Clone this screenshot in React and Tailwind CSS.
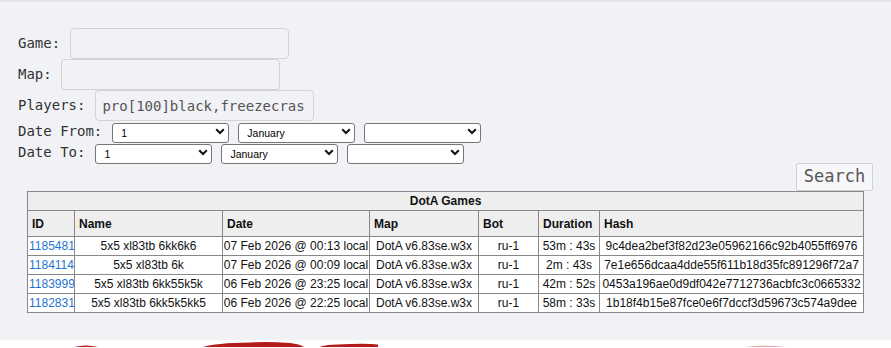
import React from 'react';

const games = [
  { id: '1185481', name: '5x5 xl83tb 6kk6k6', date: '07 Feb 2026 @ 00:13 local', map: 'DotA v6.83se.w3x', bot: 'ru-1', dur: '53m : 43s', hash: '9c4dea2bef3f82d23e05962166c92b4055ff6976' },
  { id: '1184114', name: '5x5 xl83tb 6k', date: '07 Feb 2026 @ 00:09 local', map: 'DotA v6.83se.w3x', bot: 'ru-1', dur: '2m : 43s', hash: '7e1e656dcaa4dde55f611b18d35fc891296f72a7' },
  { id: '1183999', name: '5x5 xl83tb 6kk55k5k', date: '06 Feb 2026 @ 23:25 local', map: 'DotA v6.83se.w3x', bot: 'ru-1', dur: '42m : 52s', hash: '0453a196ae0d9df042e7712736acbfc3c0665332' },
  { id: '1182831', name: '5x5 xl83tb 6kk5k5kk5', date: '06 Feb 2026 @ 22:25 local', map: 'DotA v6.83se.w3x', bot: 'ru-1', dur: '58m : 33s', hash: '1b18f4b15e87fce0e6f7dccf3d59673c574a9dee' },
];

const Chevron = () => (
  <svg className="pointer-events-none absolute right-[4px] top-[6px]" width="10" height="7" viewBox="0 0 10 7">
    <path d="M1.2 1.2 L5 5 L8.8 1.2" fill="none" stroke="#111" strokeWidth="2" />
  </svg>
);

const Select = ({ value }) => (
  <div className="relative h-[20px] w-[117px]">
    <select
      defaultValue={value}
      className="h-full w-full appearance-none rounded-[3px] border border-[#767676] bg-white pl-[8px] text-[10.5px] text-black outline-none"
      style={{ fontFamily: '"Liberation Sans", Arial, sans-serif' }}
    >
      <option value={value}>{value}</option>
    </select>
    <Chevron />
  </div>
);

const TextField = ({ value }) => (
  <input
    type="text"
    defaultValue={value}
    className="h-[31px] w-[219px] rounded-[4px] border border-[#d2d3d7] bg-[#f1f2f6] px-[6px] text-[14px] text-[#555] outline-none"
  />
);

export default function App() {
  return (
    <div className="w-[891px] bg-white">
      <div
        className="flex flex-col border-t-2 border-[#e5e6ea] bg-[#f1f2f6] px-[18px] pt-[26px] pb-[27px] text-[14px] text-[#333]"
        style={{ fontFamily: '"DejaVu Sans Mono", monospace' }}
      >
        <div className="flex items-center gap-[10px]">
          <span>Game:</span>
          <TextField value="" />
        </div>
        <div className="flex items-center gap-[9px]">
          <span>Map:</span>
          <TextField value="" />
        </div>
        <div className="flex items-center gap-[10px]">
          <span>Players:</span>
          <TextField value="pro[100]black,freezecras" />
        </div>
        <div className="flex h-[21px] items-center gap-[10px]">
          <span>Date From:</span>
          <div className="flex gap-[9px]">
            <Select value="1" />
            <Select value="January" />
            <Select value="" />
          </div>
        </div>
        <div className="flex h-[21px] items-center gap-[10px]">
          <span>Date To:</span>
          <div className="flex gap-[9px]">
            <Select value="1" />
            <Select value="January" />
            <Select value="" />
          </div>
        </div>
        <div className="flex justify-end">
          <button className="h-[28px] w-[77px] rounded-[2px] border border-[#cfd0d4] bg-[#f7f7f9] text-[17px] text-[#555]">
            Search
          </button>
        </div>
        <table
          className="ml-[9px] w-[836px] table-fixed border-collapse border border-[#888] text-[12px] text-[#111]"
          style={{ fontFamily: '"Liberation Sans", Arial, sans-serif' }}
        >
          <colgroup>
            <col className="w-[47px]" />
            <col className="w-[148px]" />
            <col className="w-[147px]" />
            <col className="w-[109px]" />
            <col className="w-[60px]" />
            <col className="w-[61px]" />
            <col className="w-[264px]" />
          </colgroup>
          <thead>
            <tr className="h-[19px] bg-[#eeeeee]">
              <th colSpan={7} className="border border-[#888] p-0 text-center font-bold">DotA Games</th>
            </tr>
            <tr className="h-[26px] bg-[#eeeeee] text-left font-bold">
              {['ID', 'Name', 'Date', 'Map', 'Bot', 'Duration', 'Hash'].map((h) => (
                <th key={h} className="border border-[#888] px-[4px] py-0 text-left">{h}</th>
              ))}
            </tr>
          </thead>
          <tbody className="bg-white">
            {games.map((g) => (
              <tr key={g.id} className="h-[19px]">
                <td className="overflow-hidden whitespace-nowrap border border-[#888] p-0 pl-[1px] text-left text-[#1f74cf]">{g.id}</td>
                <td className="whitespace-nowrap border border-[#888] p-0 text-center">{g.name}</td>
                <td className="whitespace-nowrap border border-[#888] p-0 text-center">{g.date}</td>
                <td className="whitespace-nowrap border border-[#888] p-0 text-center">{g.map}</td>
                <td className="whitespace-nowrap border border-[#888] p-0 text-center">{g.bot}</td>
                <td className="whitespace-nowrap border border-[#888] p-0 text-center">{g.dur}</td>
                <td className="whitespace-nowrap border border-[#888] p-0 text-center">{g.hash}</td>
              </tr>
            ))}
          </tbody>
        </table>
      </div>
      <svg width="891" height="7" viewBox="0 0 891 7" className="block">
        <path d="M74 7 Q86 4 98 7 Z" fill="#b41c1c" />
        <path d="M203 7 Q215 3 250 2.5 Q268 1.5 290 3 Q300 4 304 7 Z" fill="#b41c1c" />
        <path d="M320 7 Q322 4.5 350 4 Q370 3.5 378 4.5 L378 7 Z" fill="#b41c1c" />
        <path d="M745 7 Q765 4.5 785 7 Z" fill="#e3a9a9" />
      </svg>
    </div>
  );
}
